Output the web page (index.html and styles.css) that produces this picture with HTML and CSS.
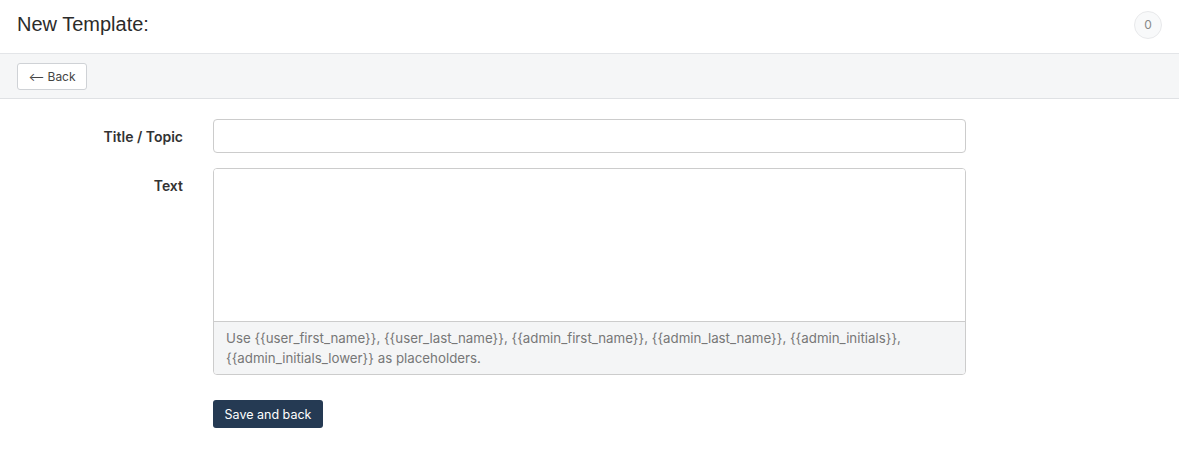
FILE: index.html
```html
<!DOCTYPE html>
<html>
<head>
<meta charset="utf-8">
<link rel="stylesheet" href="styles.css">
</head>
<body>
<header class="topbar">
  <h1 class="page-title">New Template:</h1>
  <span class="badge">0</span>
</header>
<div class="toolbar">
  <button class="btn-back"><span class="arrow">⟵</span> Back</button>
</div>
<form class="form">
  <div class="row">
    <label class="label">Title / Topic</label>
    <div class="field"><input class="input" type="text"></div>
  </div>
  <div class="row">
    <label class="label label-text">Text</label>
    <div class="field">
      <div class="textbox">
        <textarea class="textarea"></textarea>
        <div class="help">Use {{user_first_name}}, {{user_last_name}}, {{admin_first_name}}, {{admin_last_name}}, {{admin_initials}}, {{admin_initials_lower}} as placeholders.</div>
      </div>
    </div>
  </div>
  <div class="row actions">
    <div class="label"></div>
    <div class="field"><button type="button" class="btn-save">Save and back</button></div>
  </div>
</form>
</body>
</html>
```

FILE: styles.css
```css
html, body { margin: 0; padding: 0; background: #fff; }
body { font-family: Inter, "Noto Sans", sans-serif; color: #333; }
.topbar {
  height: 53px;
  border-bottom: 1px solid #e3e5e8;
  display: flex;
  align-items: center;
  justify-content: space-between;
  padding: 0 17px;
  box-sizing: content-box;
}
.page-title {
  margin: 0;
  font-family: "Liberation Sans", Arial, sans-serif;
  font-weight: normal;
  font-size: 20px;
  color: #2b2b2b;
  position: relative;
  top: -2px;
}
.badge {
  width: 26px; height: 26px;
  border: 1px solid #e8e9eb;
  border-radius: 50%;
  background: #f8f9fa;
  color: #888;
  font-size: 12px;
  display: flex; align-items: center; justify-content: center;
  position: relative; top: -2px;
}
.toolbar {
  background: #f5f6f7;
  height: 44px;
  border-bottom: 1px solid #dfe1e4;
  display: flex;
  align-items: center;
  padding: 0 17px;
}
.btn-back {
  height: 27px;
  width: 70px;
  background: #fff;
  border: 1px solid #cfd2d6;
  border-radius: 3px;
  font-family: Inter, sans-serif;
  font-size: 12px;
  color: #444;
  padding: 0;
  display: flex; align-items: center; justify-content: center; gap: 3px;
}
.arrow { font-size: 12px; }
.form { padding-top: 20px; }
.row { display: flex; margin-bottom: 15px; }
.label {
  width: 183px;
  box-sizing: border-box;
  text-align: right;
  font-weight: 600;
  font-size: 14px;
  color: #333;
  padding-top: 9px;
  flex: none;
}
.field { margin-left: 30px; width: 753px; }
.input {
  width: 100%;
  height: 34px;
  box-sizing: border-box;
  border: 1px solid #ccc;
  border-radius: 4px;
  display: block;
  margin: 0;
}
.textbox {
  border: 1px solid #ccc;
  border-radius: 4px;
  overflow: hidden;
}
.textarea {
  display: block;
  width: 100%;
  height: 153px;
  box-sizing: border-box;
  border: 0;
  border-bottom: 1px solid #ccc;
  resize: none;
  margin: 0;
}
.help {
  background: #f4f5f6;
  color: #777;
  font-size: 13.3px;
  line-height: 20px;
  padding: 6px 12px;
}
.actions { margin-top: 25px; }
.btn-save {
  height: 28px;
  width: 110px;
  background: #253a53;
  color: #fff;
  border: 0;
  border-radius: 3px;
  font-family: Inter, sans-serif;
  font-size: 12.5px;
  padding: 0;
}
```
